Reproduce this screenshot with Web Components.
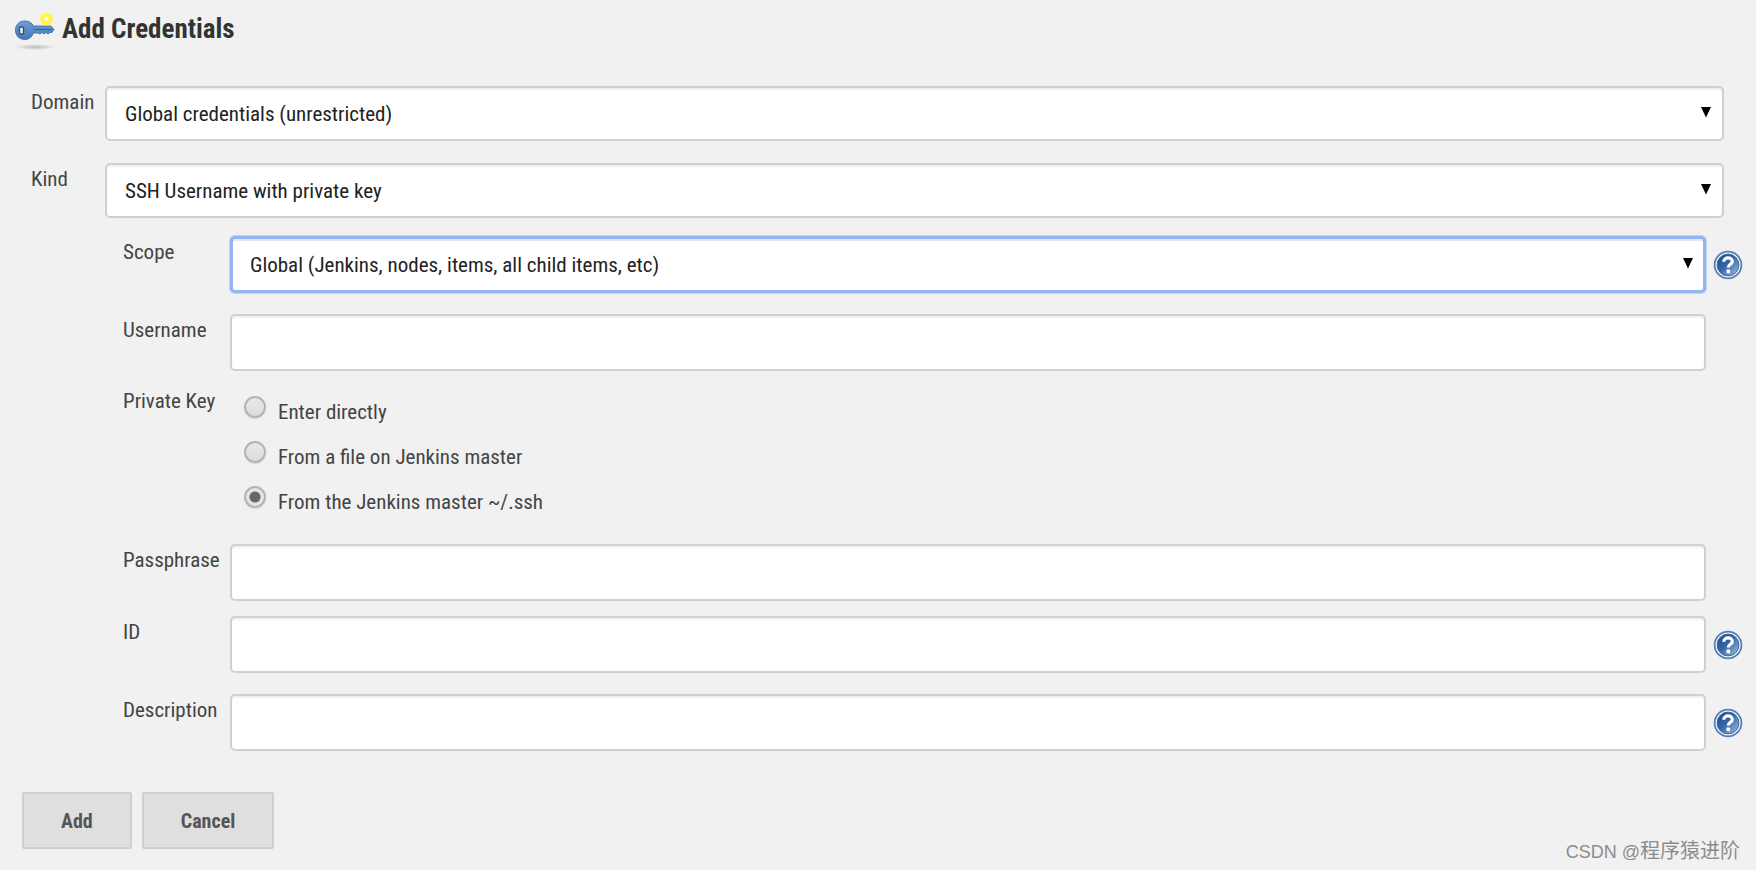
<!DOCTYPE html>
<html lang="en">
<head>
<meta charset="utf-8">
<title>Add Credentials</title>
<style>
  body {
    margin: 0;
    background: #f1f1f1;
    color: #444;
    font: 21px/24px "Roboto Condensed", "Liberation Sans", Arial, sans-serif;
  }
</style>
</head>
<body>
<credentials-page></credentials-page>

<script>
const define = (name, html, setup) => {
  const template = document.createElement('template');
  template.innerHTML = html;
  customElements.define(name, class extends HTMLElement {
    constructor() {
      super();
      this.attachShadow({ mode: 'open' }).append(template.content.cloneNode(true));
    }
    connectedCallback() {
      if (setup) setup(this, this.shadowRoot);
    }
  });
};

/* Label column shared by every kind of row; its width comes from --label-width. */
const rowStyles = `
  :host { display: flex; align-items: flex-start; }
  * { box-sizing: border-box; }
  .label { flex: none; width: var(--label-width); padding-top: 4px; white-space: nowrap; }
  .control { flex: 1; min-width: 0; position: relative; display: flex; }
  .box {
    width: 100%; height: var(--box-height); margin: 0; padding: 0 18px;
    border: 2px solid #d0d0d0; border-radius: 5px;
    background: #fff; color: #222; font: inherit;
    box-shadow: inset 0 2px 2px #f1f1f1; outline: none; appearance: none;
  }
  .help { flex: none; width: 50px; height: var(--box-height); display: flex; align-items: center; padding-left: 7px; }
`;

define('help-icon', `
  <style>
    :host { display: block; width: 30px; height: 30px; }
    button { display: block; width: 30px; height: 30px; padding: 0; border: 0; background: none; }
    svg { display: block; }
  </style>
  <button type="button" aria-label="Help">
    <svg width="30" height="30" viewBox="0 0 30 30">
      <defs><linearGradient id="g" x1="0" y1="0" x2="1" y2="1">
        <stop offset="0" stop-color="#204a87"/><stop offset=".45" stop-color="#3465a4"/><stop offset="1" stop-color="#a9c5e6"/>
      </linearGradient></defs>
      <circle cx="15" cy="15" r="13.4" fill="#f4f7fa" stroke="#5580b4" stroke-width="1.8"/>
      <circle cx="15" cy="15" r="10.9" fill="url(#g)" stroke="#3c69a3" stroke-width="1"/>
      <path d="M10.8 11.8C10.8 6.6 19.3 6.6 19.3 11.4C19.3 14.4 15.3 14.3 15.3 17.6" fill="none" stroke="#fff" stroke-width="3.2"/>
      <rect x="13.5" y="19.6" width="3.6" height="3.6" rx="1" fill="#fff"/>
    </svg>
  </button>`);

define('select-row', `
  <style>${rowStyles}
    .arrow { position: absolute; right: 12px; top: calc(50% - 8px); pointer-events: none; }
    :host([active]) .box { border: 3px solid #93b5f0; padding: 0 17px; box-shadow: 0 0 0 1px #bdd1f5, inset 0 2px 1px #e6e6e6; }
    :host(:not([help])) .help { display: none; }
  </style>
  <label class="label" for="field"></label>
  <div class="control">
    <select class="box" id="field"><option></option></select>
    <svg class="arrow" width="12" height="12" viewBox="0 0 12 12"><path d="M1 1h10L6 11.5z" fill="#000"/></svg>
  </div>
  <div class="help"><help-icon></help-icon></div>`,
  (host, root) => {
    root.querySelector('label').textContent = host.getAttribute('label');
    root.querySelector('option').textContent = host.getAttribute('value');
  });

define('text-row', `
  <style>${rowStyles}
    :host(:not([help])) help-icon { display: none; }
  </style>
  <label class="label" for="field"></label>
  <div class="control"><input class="box" id="field"></div>
  <div class="help"><help-icon></help-icon></div>`,
  (host, root) => {
    root.querySelector('label').textContent = host.getAttribute('label');
    root.querySelector('input').type = host.getAttribute('type') || 'text';
  });

define('key-source', `
  <style>${rowStyles}
    .options { display: flex; flex-direction: column; gap: 21px; padding: 11px 0 0 14px; }
    .options label { display: flex; align-items: flex-start; gap: 12px; height: 24px; white-space: nowrap; }
    input {
      appearance: none; flex: none; width: 22px; height: 22px; margin: 0;
      border: 2px solid #b4b4b4; border-radius: 50%;
      background: linear-gradient(#e8e8e8, #dcdcdc); box-shadow: 0 1px 1px #d8d8d8;
    }
    input:checked { background: radial-gradient(circle, #666 0 5px, #e4e4e4 6px); }
    .options span { padding-top: 4px; }
  </style>
  <div class="label" id="caption">Private Key</div>
  <div class="options" role="radiogroup" aria-labelledby="caption">
    <label><input type="radio" name="source"><span>Enter directly</span></label>
    <label><input type="radio" name="source"><span>From a file on Jenkins master</span></label>
    <label><input type="radio" name="source" checked><span>From the Jenkins master ~/.ssh</span></label>
  </div>`);

define('form-button', `
  <style>
    :host { display: block; }
    button {
      height: 57px; padding: 0 37px; border: 2px solid #cfcfcf; border-radius: 2px;
      background: #dfdfdf; color: #555; font: inherit; font-size: 20px; font-weight: 700;
    }
  </style>
  <button type="button"><slot></slot></button>`);

define('page-title', `
  <style>
    :host { display: flex; align-items: flex-start; gap: 6px; padding: 12px 14px 0; }
    h1 { margin: 0; padding-top: 2px; font-size: 27px; line-height: 30px; font-weight: 700; color: #333; }
    svg { display: block; flex: none; }
  </style>
  <svg width="42" height="38" viewBox="0 0 42 38" aria-hidden="true">
    <defs>
      <radialGradient id="shade"><stop offset="0" stop-color="#bbb"/><stop offset="1" stop-color="#bbb" stop-opacity="0"/></radialGradient>
      <radialGradient id="glow"><stop offset="0" stop-color="#fff"/><stop offset=".2" stop-color="#fffde0"/><stop offset=".45" stop-color="#fff335"/><stop offset=".85" stop-color="#fff564"/><stop offset="1" stop-color="#fff564" stop-opacity="0"/></radialGradient>
      <linearGradient id="blue" x1="0" y1="0" x2="0" y2="1"><stop offset="0" stop-color="#6f9fd4"/><stop offset="1" stop-color="#4178b8"/></linearGradient>
    </defs>
    <ellipse cx="21" cy="35" rx="20" ry="3" fill="url(#shade)"/>
    <path d="M11 9C15 9 18 11 19.5 14H37L40 17.5L38 20.5H36L34 22L32 20.5L30 22L28 20.5L26 22L24 21H19.5C18 25 15 27.5 11 27.5C5 27.5 1.5 23.5 1.5 18.2S5 9 11 9Z" fill="url(#blue)" stroke="#4a78af" stroke-width="1"/>
    <path d="M20 17.5H38" stroke="#31639b" stroke-width="1"/>
    <rect x="5.5" y="15" width="4" height="7" rx="1" fill="#f1f1f1" stroke="#34526f" stroke-width="1.4"/>
    <circle cx="32.5" cy="7" r="7" fill="url(#glow)"/>
  </svg>
  <h1><slot></slot></h1>`);

define('credentials-page', `
  <style>
    :host { display: block; position: relative; min-height: 100vh; overflow: hidden; }
    form { display: flex; flex-direction: column; padding-top: 36px; }
    .outer { --label-width: 74px; --box-height: 55px; display: flex; flex-direction: column; gap: 22px; padding: 0 32px 0 31px; }
    .inner { --label-width: 107px; --box-height: 57px; padding: 18px 0 0 123px; }
    .inner > * { margin-bottom: 21px; }
    .inner > [tight] { margin-bottom: 15px; }
    .inner > key-source { margin: -7px 0 34px; }
    .actions { display: flex; gap: 10px; padding: 20px 22px; }
    .mark {
      position: absolute; right: 16px; bottom: 3px; color: #8c8c8c;
      font: 20px/30px "Noto Sans CJK SC", sans-serif;
    }
    .mark span { font-family: "Liberation Sans", sans-serif; font-size: 18px; }
  </style>
  <page-title>Add Credentials</page-title>
  <form>
    <div class="outer">
      <select-row label="Domain" value="Global credentials (unrestricted)"></select-row>
      <select-row label="Kind" value="SSH Username with private key"></select-row>
    </div>
    <div class="inner">
      <select-row active help label="Scope" value="Global (Jenkins, nodes, items, all child items, etc)"></select-row>
      <text-row label="Username"></text-row>
      <key-source></key-source>
      <text-row tight label="Passphrase" type="password"></text-row>
      <text-row help label="ID"></text-row>
      <text-row help label="Description"></text-row>
    </div>
    <div class="actions"><form-button>Add</form-button><form-button>Cancel</form-button></div>
  </form>
  <div class="mark"><span>CSDN @</span>程序猿进阶</div>`);
</script>
</body>
</html>
